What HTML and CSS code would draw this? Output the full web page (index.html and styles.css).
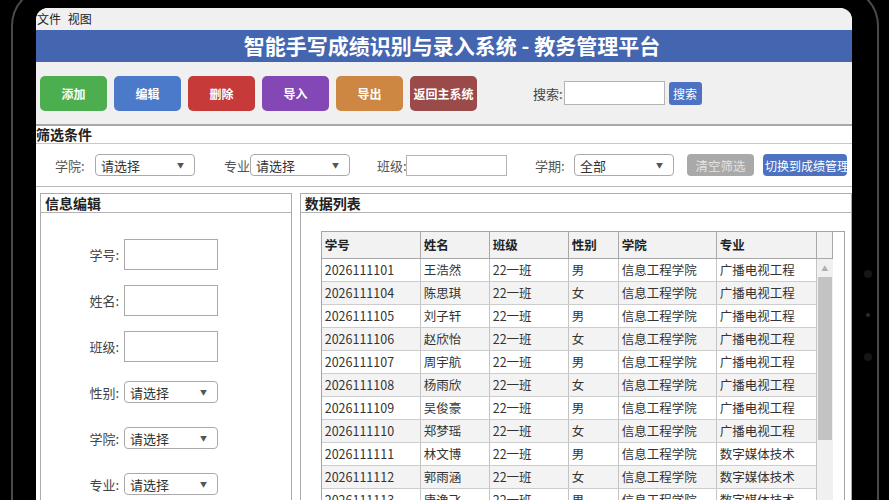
FILE: index.html
```html
<!DOCTYPE html>
<html lang="zh-CN">
<head>
    <meta charset="UTF-8">
    <meta name="viewport" content="width=device-width, initial-scale=1.0">
    <title>智能手写成绩识别与录入系统 - 教务管理平台</title>
    <link rel="stylesheet" href="styles.css">
</head>
<body>
    <div class="device">
        <span class="cam cam-1"></span>
        <span class="cam cam-2"></span>
        <span class="cam cam-3"></span>

        <div class="screen">
            <div class="menubar">
                <span>文件</span>
                <span>视图</span>
            </div>

            <div class="titlebar">智能手写成绩识别与录入系统 - 教务管理平台</div>

            <div class="toolbar">
                <button class="tool-btn btn-add">添加</button>
                <button class="tool-btn btn-edit">编辑</button>
                <button class="tool-btn btn-del">删除</button>
                <button class="tool-btn btn-import">导入</button>
                <button class="tool-btn btn-export">导出</button>
                <button class="tool-btn btn-back">返回主系统</button>

                <span class="search-label">搜索:</span>
                <input class="search-input" type="text">
                <button class="search-btn">搜索</button>
            </div>

            <div class="filter-group">
                <div class="group-title">筛选条件</div>
                <div class="filter-row">
                    <span class="f-label f-college">学院:</span>
                    <div class="select f-select">
                        <span>请选择</span><span class="arrow">▼</span>
                    </div>

                    <span class="f-label f-major">专业:</span>
                    <div class="select f-select">
                        <span>请选择</span><span class="arrow">▼</span>
                    </div>

                    <span class="f-label f-class">班级:</span>
                    <input class="f-input" type="text">

                    <span class="f-label f-term">学期:</span>
                    <div class="select f-select">
                        <span>全部</span><span class="arrow">▼</span>
                    </div>

                    <button class="btn-clear">清空筛选</button>
                    <button class="btn-switch">切换到成绩管理</button>
                </div>
            </div>

            <div class="panels">
                <div class="panel panel-edit">
                    <div class="panel-title">信息编辑</div>
                    <div class="form">
                        <div class="form-row">
                            <label class="form-label">学号:</label>
                            <input class="form-input" type="text">
                        </div>
                        <div class="form-row">
                            <label class="form-label">姓名:</label>
                            <input class="form-input" type="text">
                        </div>
                        <div class="form-row">
                            <label class="form-label">班级:</label>
                            <input class="form-input" type="text">
                        </div>
                        <div class="form-row">
                            <label class="form-label">性别:</label>
                            <div class="select form-select">
                                <span>请选择</span><span class="arrow">▼</span>
                            </div>
                        </div>
                        <div class="form-row">
                            <label class="form-label">学院:</label>
                            <div class="select form-select">
                                <span>请选择</span><span class="arrow">▼</span>
                            </div>
                        </div>
                        <div class="form-row">
                            <label class="form-label">专业:</label>
                            <div class="select form-select">
                                <span>请选择</span><span class="arrow">▼</span>
                            </div>
                        </div>
                    </div>
                </div>

                <div class="panel panel-data">
                    <div class="panel-title">数据列表</div>

                    <div class="grid">
                        <div class="grid-main">
                            <div class="grid-head">
                                <div>学号</div>
                                <div>姓名</div>
                                <div>班级</div>
                                <div>性别</div>
                                <div>学院</div>
                                <div>专业</div>
                                <div></div>
                            </div>
                            <div class="grid-body">
                                <div class="rows" id="rows"></div>
                                <div class="vscroll">
                                    <div class="scroll-arrow">▲</div>
                                    <div class="scroll-thumb"></div>
                                </div>
                            </div>
                        </div>
                    </div>
                </div>
            </div>
        </div>
    </div>

    <script>
        const students = [
            ['2026111101', '王浩然', '22一班', '男', '信息工程学院', '广播电视工程'],
            ['2026111104', '陈思琪', '22一班', '女', '信息工程学院', '广播电视工程'],
            ['2026111105', '刘子轩', '22一班', '男', '信息工程学院', '广播电视工程'],
            ['2026111106', '赵欣怡', '22一班', '女', '信息工程学院', '广播电视工程'],
            ['2026111107', '周宇航', '22一班', '男', '信息工程学院', '广播电视工程'],
            ['2026111108', '杨雨欣', '22一班', '女', '信息工程学院', '广播电视工程'],
            ['2026111109', '吴俊豪', '22一班', '男', '信息工程学院', '广播电视工程'],
            ['2026111110', '郑梦瑶', '22一班', '女', '信息工程学院', '广播电视工程'],
            ['2026111111', '林文博', '22一班', '男', '信息工程学院', '数字媒体技术'],
            ['2026111112', '郭雨涵', '22一班', '女', '信息工程学院', '数字媒体技术'],
            ['2026111113', '唐逸飞', '22一班', '男', '信息工程学院', '数字媒体技术']
        ];

        const rows = document.getElementById('rows');
        students.forEach(function(s) {
            const row = document.createElement('div');
            row.className = 'row';
            row.innerHTML = s.map(function(v) { return '<span>' + v + '</span>'; }).join('');
            rows.appendChild(row);
        });
    </script>
</body>
</html>
```

FILE: styles.css
```css
* {
    margin: 0;
    padding: 0;
    box-sizing: border-box;
}

body {
    font-family: "Noto Sans CJK SC", "Noto Sans", sans-serif;
    background: #000;
    height: 500px;
    overflow: hidden;
    color: #333;
}

/* tablet frame */
.device {
    position: relative;
    margin: -14px 10px 0 11px;
    height: 560px;
    border: 2px solid #4a4a4a;
    border-radius: 40px;
    padding: 20px 25px 0 23px;
}

.cam {
    position: absolute;
    right: 5px;
    width: 8px;
    height: 8px;
    border-radius: 50%;
    background: #161616;
}

.cam-1 { top: 282px; }
.cam-2 { top: 325px; width: 4px; height: 4px; right: 7px; background: #2a2a3a; }
.cam-3 { top: 365px; }

.screen {
    width: 816px;
    height: 530px;
    background: #fff;
    border-radius: 12px 12px 0 0;
    overflow: hidden;
}

.menubar {
    height: 22px;
    line-height: 21px;
    font-size: 12px;
    color: #222;
    background: #f0f0f0;
    padding-left: 1px;
}

.menubar span {
    margin-right: 4px;
}

.titlebar {
    height: 32px;
    line-height: 31px;
    background: #4466b1;
    color: #fff;
    font-size: 21px;
    font-weight: 700;
    text-align: center;
    padding-left: 16px;
}

/* toolbar */
.toolbar {
    height: 62px;
    display: flex;
    align-items: center;
    gap: 7px;
    padding-left: 4px;
    background: #f0f0f0;
}

.tool-btn {
    width: 67px;
    height: 35px;
    border: none;
    border-radius: 5px;
    color: #fff;
    font-family: inherit;
    font-size: 12px;
    font-weight: 700;
}

.btn-add { background: #4cae4f; }
.btn-edit { background: #4a7ac9; }
.btn-del { background: #c63a3a; }
.btn-import { background: #8348b6; }
.btn-export { background: #cd8742; }
.btn-back { background: #9a4a49; }

.search-label {
    margin-left: 49px;
    font-size: 13px;
    color: #444;
}

.search-input {
    width: 101px;
    height: 24px;
    border: 1px solid #b4b4b4;
    background: #fff;
    margin-left: -6px;
}

.search-btn {
    width: 33px;
    height: 23px;
    margin-left: -3px;
    border: none;
    border-radius: 3px;
    background: #4d72c2;
    color: #fff;
    font-family: inherit;
    font-size: 12px;
}

/* filter group */
.filter-group {
    border-top: 2px solid #a8a8a8;
    border-bottom: 1px solid #b8b8b8;
    background: #fff;
}

.group-title {
    height: 18px;
    line-height: 17px;
    font-size: 14px;
    font-weight: 700;
    color: #222;
    border-bottom: 1px solid #c8c8c8;
}

.filter-row {
    height: 42px;
    display: flex;
    align-items: center;
    padding-left: 19px;
}

.f-label {
    font-size: 13px;
    color: #555;
    white-space: nowrap;
}

.f-college { width: 40px; }
.f-major { width: 26px; margin-left: 29px; }
.f-class { width: 29px; margin-left: 27px; }
.f-term { width: 39px; margin-left: 28px; }

.select {
    display: flex;
    align-items: center;
    justify-content: space-between;
    height: 22px;
    border: 1px solid #aaa;
    border-radius: 4px;
    background: #fff;
    padding: 0 10px 0 5px;
    font-size: 13px;
    color: #333;
}

.arrow {
    font-size: 7px;
    color: #555;
}

.f-select {
    width: 100px;
}

.f-input {
    width: 101px;
    height: 21px;
    border: 1px solid #b4b4b4;
    background: #fff;
}

.btn-clear {
    width: 67px;
    height: 22px;
    margin-left: 13px;
    border: none;
    border-radius: 4px;
    background: #a9a9a9;
    color: #e2e2e2;
    font-family: inherit;
    font-size: 12.5px;
}

.btn-switch {
    width: 84px;
    height: 22px;
    margin-left: 9px;
    border: none;
    border-radius: 4px;
    background: #4d72c2;
    color: #fff;
    font-family: inherit;
    font-size: 12px;
    white-space: nowrap;
    overflow: hidden;
    text-align: left;
    padding-left: 2px;
}

/* panels */
.panels {
    display: flex;
    gap: 8px;
    padding: 6px 0 0 4px;
}

.panel {
    height: 330px;
    border: 1px solid #ababab;
    background: #fff;
}

.panel-edit {
    width: 252px;
}

.panel-data {
    width: 553px;
}

.panel-title {
    height: 19px;
    line-height: 18px;
    padding-left: 4px;
    font-size: 14px;
    font-weight: 700;
    color: #222;
    border-bottom: 1px solid #b4b4b4;
}

.form {
    padding-top: 18px;
}

.form-row {
    height: 46px;
    display: flex;
    align-items: center;
}

.form-label {
    width: 78px;
    text-align: right;
    font-size: 13px;
    color: #444;
}

.form-input {
    width: 94px;
    height: 31px;
    margin-left: 5px;
    border: 1px solid #aaa;
    background: #fff;
}

.form-select {
    width: 94px;
    margin-left: 5px;
}

/* data grid */
.grid {
    width: 524px;
    height: 300px;
    margin: 18px 0 0 20px;
    border: 1px solid #a4a4a4;
    background: #fff;
}

.grid-main {
    width: 511px;
}

.grid-head {
    display: grid;
    grid-template-columns: 99px 69px 79px 50px 98px 100px 16px;
    background: #f2f2f2;
}

.grid-head div {
    height: 27px;
    line-height: 26px;
    padding-left: 3px;
    font-size: 12.5px;
    font-weight: 700;
    color: #222;
    border-right: 1px solid #a8a8a8;
    border-bottom: 1px solid #a8a8a8;
}

.grid-body {
    display: flex;
}

.rows {
    width: 495px;
}

.row {
    display: grid;
    grid-template-columns: 99px 69px 79px 50px 98px 100px;
    height: 23px;
    border-bottom: 1px solid #cdcdcd;
}

.row:nth-child(even) {
    background: #f3f3f3;
}

.row span {
    padding-left: 3px;
    line-height: 22px;
    font-size: 12.5px;
    color: #333;
    border-right: 1px solid #c4c4c4;
    white-space: nowrap;
}

.vscroll {
    width: 16px;
    background: #f0f0f0;
}

.scroll-arrow {
    height: 18px;
    line-height: 18px;
    text-align: center;
    font-size: 7px;
    color: #b0b0b0;
}

.scroll-thumb {
    width: 14px;
    height: 163px;
    margin-left: 1px;
    background: #c3c3c3;
}
```
